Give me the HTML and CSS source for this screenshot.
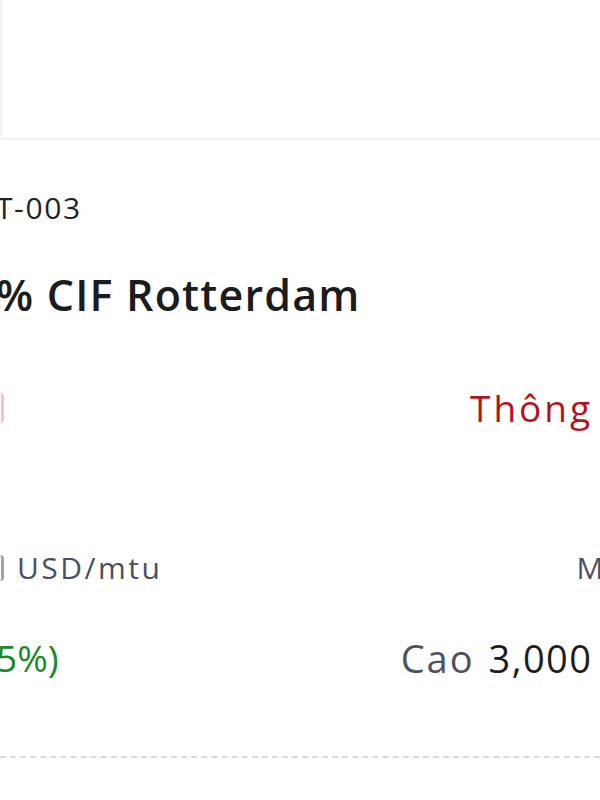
FILE: index.html
```html
<!DOCTYPE html>
<html lang="vi">
<head>
<meta charset="utf-8">
<link rel="stylesheet" href="styles.css">
</head>
<body>
<div class="header"></div>
<div class="card">
  <div class="code">T-003</div>
  <div class="title">% CIF Rotterdam</div>
  <div class="row row-1">
    <span class="edge edge-red"></span>
    <span class="link">Thông tin</span>
  </div>
  <div class="row row-2">
    <span class="edge edge-dark"></span>
    <span class="unit">USD/mtu</span>
    <span class="muted right-2">Mở cửa</span>
  </div>
  <div class="row row-3">
    <span class="change">5%)</span>
    <span class="stat"><span class="muted label">Cao</span><span class="val">3,000</span></span>
  </div>
  <div class="dash"></div>
</div>
</body>
</html>
```
FILE: styles.css
```css
html, body {
  margin: 0;
  padding: 0;
  background: #ffffff;
}
body {
  width: 600px;
  height: 800px;
  overflow: hidden;
  font-family: "Open Sans", "Liberation Sans", sans-serif;
  color: #1d1e22;
}
.header {
  height: 138px;
  border-bottom: 2px solid #f1f1f1;
  border-left: 2px solid #f4f4f4;
  box-sizing: content-box;
}
.card {
  display: flex;
  flex-direction: column;
}
.code {
  margin-top: 50px;
  margin-left: -4px;
  font-size: 30px;
  line-height: 36px;
  letter-spacing: 1.6px;
  color: #222327;
  white-space: nowrap;
}
.title {
  margin-top: 43px;
  margin-left: -4px;
  font-size: 43px;
  line-height: 52px;
  font-weight: 600;
  letter-spacing: 1.2px;
  color: #1b1c20;
  white-space: nowrap;
}
.row {
  display: flex;
  align-items: center;
  white-space: nowrap;
}
.row-1 {
  margin-top: 64px;
  height: 46px;
}
.edge {
  width: 5px;
  flex: none;
}
.edge-red {
  height: 30px;
  border-right: 3px solid #f0c4c7;
  border-radius: 0 16px 16px 0;
  width: 1px;
}
.link {
  margin-left: 466px;
  font-size: 37px;
  line-height: 46px;
  letter-spacing: 3px;
  color: #b3151f;
}
.row-2 {
  margin-top: 117px;
  height: 40px;
}
.edge-dark {
  height: 26px;
  border-right: 3px solid #9ea3ab;
  border-radius: 0 14px 14px 0;
  width: 1px;
}
.unit {
  margin-left: 13px;
  font-size: 30px;
  line-height: 40px;
  letter-spacing: 2.5px;
  color: #4b5060;
}
.muted {
  color: #4d5262;
}
.right-2 {
  margin-left: 414px;
  font-size: 30px;
  line-height: 40px;
  letter-spacing: 2px;
}
.row-3 {
  margin-top: 47px;
  height: 46px;
}
.change {
  margin-left: -4px;
  font-size: 37px;
  line-height: 46px;
  color: #1c8a2c;
}
.stat {
  margin-left: 342px;
  font-size: 38px;
  line-height: 46px;
  display: flex;
  gap: 14px;
}
.label {
  letter-spacing: 2px;
}
.val {
  color: #1d1e22;
  letter-spacing: 1.4px;
}
.dash {
  margin-top: 75px;
  height: 0;
  border-top: 2px dashed #dadada;
}
```
